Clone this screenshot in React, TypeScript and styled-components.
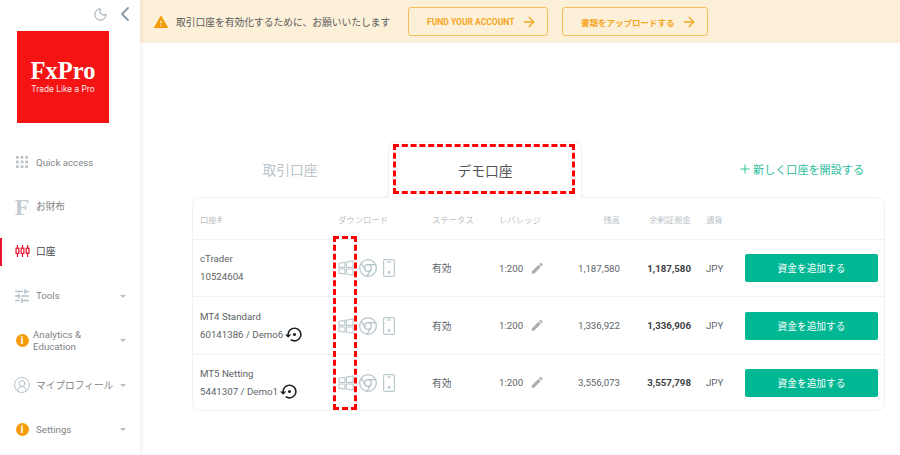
import React from "react";
import styled, { createGlobalStyle } from "styled-components";
import { ArrowRight, ChevronLeft, Chrome, CircleUserRound, Moon, Plus } from "lucide-react";
import { MdEdit, MdSettingsBackupRestore, MdTune, MdWarning } from "react-icons/md";

const GlobalStyle = createGlobalStyle`
    html, body {
        margin: 0;
        padding: 0;
        background: #fff;
    }
    body {
        font-family: Roboto, "Noto Sans CJK JP", sans-serif;
        color: #555;
    }
    * {
        box-sizing: border-box;
    }
`;

const Page = styled.div`
    display: flex;
    width: 900px;
    height: 455px;
    overflow: hidden;
`;

const Sidebar = styled.aside`
    flex: 0 0 140px;
    display: flex;
    flex-direction: column;
    box-shadow: 1px 0 5px rgba(0, 0, 0, 0.07);
    z-index: 1;
`;

const SideTop = styled.div`
    display: flex;
    justify-content: flex-end;
    align-items: center;
    gap: 4.5px;
    height: 31px;
    padding: 0 3.5px 3px 0;
    color: #8a9aa6;
`;

const Logo = styled.div`
    width: 92px;
    height: 92px;
    margin-left: 17px;
    padding-top: 27px;
    background: #f51414;
    color: #fff;
    text-align: center;

    .name {
        font-family: "Liberation Serif", serif;
        font-size: 24.5px;
        font-weight: 700;
        line-height: 25px;
    }
    .tag {
        margin-top: 1px;
        font-family: Inter, sans-serif;
        font-size: 8.3px;
        line-height: 11px;
        opacity: 0.9;
    }
`;

const Nav = styled.nav`
    display: flex;
    flex-direction: column;
    margin-top: 17px;
`;

const NavItem = styled.div<{ $active?: boolean }>`
    position: relative;
    display: flex;
    align-items: center;
    height: 44.6px;
    padding: 0 14px 0 10px;
    font-size: 9.7px;
    line-height: 11.5px;
    color: ${(p) => (p.$active ? "#444" : "#7f8487")};

    ${(p) =>
        p.$active &&
        `&::before {
            content: "";
            position: absolute;
            left: 0;
            top: 9px;
            bottom: 8px;
            width: 1.5px;
            background: #e8112d;
        }`}
`;

const NavIcon = styled.span<{ $shift?: number }>`
    flex: 0 0 24px;
    display: flex;
    justify-content: center;
    margin-right: ${(p) => 2 - (p.$shift ?? 0)}px;
    color: #b3bfc7;
`;

const NavLabel = styled.span`
    flex: 1;
`;

const Caret = styled.span`
    flex: none;
    width: 0;
    height: 0;
    border-left: 3px solid transparent;
    border-right: 3px solid transparent;
    border-top: 3px solid #b9bec2;
`;

const InfoDot = styled.span`
    width: 13px;
    height: 13px;
    border-radius: 50%;
    background: #f59c0a;
    color: #fff;
    font-size: 10px;
    font-weight: 700;
    line-height: 13px;
    text-align: center;
`;

const LetterF = styled.span`
    font-family: "Liberation Serif", serif;
    font-size: 24px;
    font-weight: 700;
    line-height: 22px;
    color: #c3ccd3;
`;

const Main = styled.main`
    flex: 1;
    display: flex;
    flex-direction: column;
    min-width: 0;
`;

const Banner = styled.div`
    display: flex;
    align-items: center;
    height: 43px;
    padding-left: 13px;
    background: #fdf0d9;
    font-size: 9.75px;
    color: #5a5a5a;

    .msg {
        margin-left: 7px;
        margin-right: 18px;
    }
`;

const BannerButton = styled.button<{ $w: number }>`
    display: flex;
    align-items: center;
    justify-content: center;
    gap: 7px;
    width: ${(p) => p.$w}px;
    height: 29px;
    margin-right: 14px;
    padding: 0 0 0 8px;
    border: 1px solid #f5bd5a;
    border-radius: 3px;
    background: transparent;
    color: #f5a623;
    font-family: inherit;
    font-size: 8.5px;
    font-weight: 700;
`;

const Content = styled.div`
    display: flex;
    flex-direction: column;
    padding: 98px 15px 0 52px;
`;

const Tabs = styled.div`
    display: flex;
    height: 56px;
`;

const Tab = styled.div`
    display: flex;
    align-items: center;
    justify-content: center;
    width: 196px;
    font-size: 13.8px;
    color: #bcc5ca;
`;

const ActiveTab = styled(Tab)`
    position: relative;
    width: 194px;
    margin-bottom: -1px;
    border: 1px solid #f0f2f3;
    border-bottom: none;
    border-radius: 8px 8px 0 0;
    background: #fff;
    color: #555;
    z-index: 1;

    &::before,
    &::after {
        content: "";
        position: absolute;
        bottom: 0;
        width: 7px;
        height: 7px;
        border-bottom: 1px solid #f0f2f3;
    }
    &::before {
        left: -8px;
        border-right: 1px solid #f0f2f3;
        border-bottom-right-radius: 7px;
    }
    &::after {
        right: -8px;
        border-left: 1px solid #f0f2f3;
        border-bottom-left-radius: 7px;
    }
`;

const NewAccount = styled.div`
    display: flex;
    align-items: center;
    gap: 1px;
    margin-left: auto;
    padding: 0 21px 0 0;
    font-size: 11.1px;
    color: #2cbd9c;
`;

const Dashed = styled.div`
    position: absolute;
    border: 3px dashed #f00;
    pointer-events: none;
    z-index: 3;
`;

const TabMark = styled(Dashed)`
    left: 4px;
    top: 2px;
    width: 182px;
    height: 50px;
`;

const ColumnMark = styled(Dashed)`
    left: 140px;
    top: 38px;
    width: 24px;
    height: 174px;
`;

const Card = styled.div`
    position: relative;
    width: 693px;
    height: 214px;
    border: 1px solid #eff1f2;
    border-radius: 8px;
`;

const Row = styled.div<{ $h: number; $last?: boolean }>`
    display: grid;
    grid-template-columns: 138px 94px 67px 60px 61px 71px 54px 133px;
    align-items: center;
    height: ${(p) => p.$h}px;
    padding-left: 7px;
    border-bottom: ${(p) => (p.$last ? "none" : "1px solid #f0f2f3")};
    font-size: 9.7px;
    color: #5d6468;

    & > :nth-child(5),
    & > :nth-child(6) {
        text-align: right;
    }
    & > :nth-child(7) {
        padding-left: 15px;
    }
`;

const HeadRow = styled(Row)`
    font-size: 8.4px;
    color: #bcc3c7;
`;

const Account = styled.div`
    display: flex;
    flex-direction: column;
    gap: 4px;
    line-height: 14px;

    .id {
        display: flex;
        align-items: center;
        gap: 1px;
    }
    .id svg {
        margin: -3px 0 -3px 1px;
    }
`;

const Downloads = styled.div`
    display: flex;
    align-items: center;
    gap: 4px;
    color: #b4c4cb;

    svg:last-child {
        margin-left: 1px;
    }
`;

const Leverage = styled.div`
    display: flex;
    align-items: center;
    gap: 6.5px;
    color: #5d6468;

    svg {
        color: #a9afb3;
    }
`;

const Strong = styled.div`
    font-weight: 700;
    color: #3c4144;
`;

const AddFunds = styled.button`
    width: 133px;
    height: 28px;
    padding: 0;
    border: none;
    border-radius: 2px;
    background: #00b793;
    color: #fff;
    font-family: inherit;
    font-size: 9.7px;
`;

const GridDots = () => (
    <svg width="12" height="12" viewBox="0 0 13 13" fill="#bcc4c9">
        {[0, 5, 10].map((y) =>
            [0, 5, 10].map((x) => <rect key={`${x}-${y}`} x={x} y={y} width="3" height="3" />)
        )}
    </svg>
);

const Candles = () => (
    <svg width="15" height="12" viewBox="0 0 15 13" fill="none" stroke="#e8112d" strokeWidth="1.3">
        {[2, 7.5, 13].map((x) => (
            <g key={x}>
                <path d={`M${x} 0v13`} />
                <rect x={x - 1.5} y="3.5" width="3" height="5.5" fill="#fff" />
            </g>
        ))}
    </svg>
);

const WindowsIcon = () => (
    <svg width="16" height="16" viewBox="0 0 17 16" fill="none" stroke="#bccacf" strokeWidth="1.2">
        <path d="M1 3l6.3-1v5.3H1zM9 1.7l7-1.2v6.8H9zM1 9h6.3v5.4L1 13.5zM9 9h7v6.6l-7-1.1z" />
    </svg>
);

const PhoneIcon = () => (
    <svg width="12" height="18" viewBox="0 0 12 18" fill="none" stroke="#bccacf" strokeWidth="1.2">
        <rect x="0.6" y="0.6" width="10.8" height="16.8" rx="1.2" />
        <path d="M4 3h4" />
        <circle cx="6" cy="13.5" r="0.8" fill="#bccacf" />
    </svg>
);

const accounts = [
    { name: "cTrader", id: "10524604", demo: false, balance: "1,187,580", free: "1,187,580", h: 57 },
    { name: "MT4 Standard", id: "60141386 / Demo6", demo: true, balance: "1,336,922", free: "1,336,906", h: 58 },
    { name: "MT5 Netting", id: "5441307 / Demo1", demo: true, balance: "3,556,073", free: "3,557,798", h: 55 },
];

export default function App() {
    return (
        <Page>
            <GlobalStyle />
            <Sidebar>
                <SideTop>
                    <Moon size={15} strokeWidth={1.5} />
                    <ChevronLeft size={24} strokeWidth={1.8} />
                </SideTop>
                <Logo>
                    <div className="name">FxPro</div>
                    <div className="tag">Trade Like a Pro</div>
                </Logo>
                <Nav>
                    <NavItem>
                        <NavIcon><GridDots /></NavIcon>
                        <NavLabel>Quick access</NavLabel>
                    </NavItem>
                    <NavItem>
                        <NavIcon><LetterF>F</LetterF></NavIcon>
                        <NavLabel>お財布</NavLabel>
                    </NavItem>
                    <NavItem $active>
                        <NavIcon><Candles /></NavIcon>
                        <NavLabel>口座</NavLabel>
                    </NavItem>
                    <NavItem>
                        <NavIcon><MdTune size={18} /></NavIcon>
                        <NavLabel>Tools</NavLabel>
                        <Caret />
                    </NavItem>
                    <NavItem>
                        <NavIcon $shift={3}><InfoDot>i</InfoDot></NavIcon>
                        <NavLabel>Analytics &<br />Education</NavLabel>
                        <Caret />
                    </NavItem>
                    <NavItem>
                        <NavIcon><CircleUserRound size={18} strokeWidth={1.3} /></NavIcon>
                        <NavLabel>マイプロフィール</NavLabel>
                        <Caret />
                    </NavItem>
                    <NavItem>
                        <NavIcon><InfoDot>i</InfoDot></NavIcon>
                        <NavLabel>Settings</NavLabel>
                        <Caret />
                    </NavItem>
                </Nav>
            </Sidebar>
            <Main>
                <Banner>
                    <MdWarning size={16} color="#f59c0a" />
                    <span className="msg">取引口座を有効化するために、お願いいたします</span>
                    <BannerButton $w={140}>
                        FUND YOUR ACCOUNT <ArrowRight size={16} />
                    </BannerButton>
                    <BannerButton $w={146}>
                        書類をアップロードする <ArrowRight size={16} />
                    </BannerButton>
                </Banner>
                <Content>
                    <Tabs>
                        <Tab>取引口座</Tab>
                        <ActiveTab>
                            デモ口座
                            <TabMark />
                        </ActiveTab>
                        <NewAccount>
                            <Plus size={14} strokeWidth={1.6} />
                            新しく口座を開設する
                        </NewAccount>
                    </Tabs>
                    <Card>
                        <ColumnMark />
                        <HeadRow $h={42}>
                            <div>口座#</div>
                            <div>ダウンロード</div>
                            <div>ステータス</div>
                            <div>レバレッジ</div>
                            <div>残高</div>
                            <div>余剰証拠金</div>
                            <div>通貨</div>
                            <div />
                        </HeadRow>
                        {accounts.map((a, i) => (
                            <Row key={a.name} $h={a.h} $last={i === accounts.length - 1}>
                                <Account>
                                    <div>{a.name}</div>
                                    <div className="id">
                                        {a.id}
                                        {a.demo && <MdSettingsBackupRestore size={19} color="#222" />}
                                    </div>
                                </Account>
                                <Downloads>
                                    <WindowsIcon />
                                    <Chrome size={20} strokeWidth={1.5} />
                                    <PhoneIcon />
                                </Downloads>
                                <div>有効</div>
                                <Leverage>
                                    1:200
                                    <MdEdit size={14.5} />
                                </Leverage>
                                <div>{a.balance}</div>
                                <Strong>{a.free}</Strong>
                                <div>JPY</div>
                                <AddFunds>資金を追加する</AddFunds>
                            </Row>
                        ))}
                    </Card>
                </Content>
            </Main>
        </Page>
    );
}
